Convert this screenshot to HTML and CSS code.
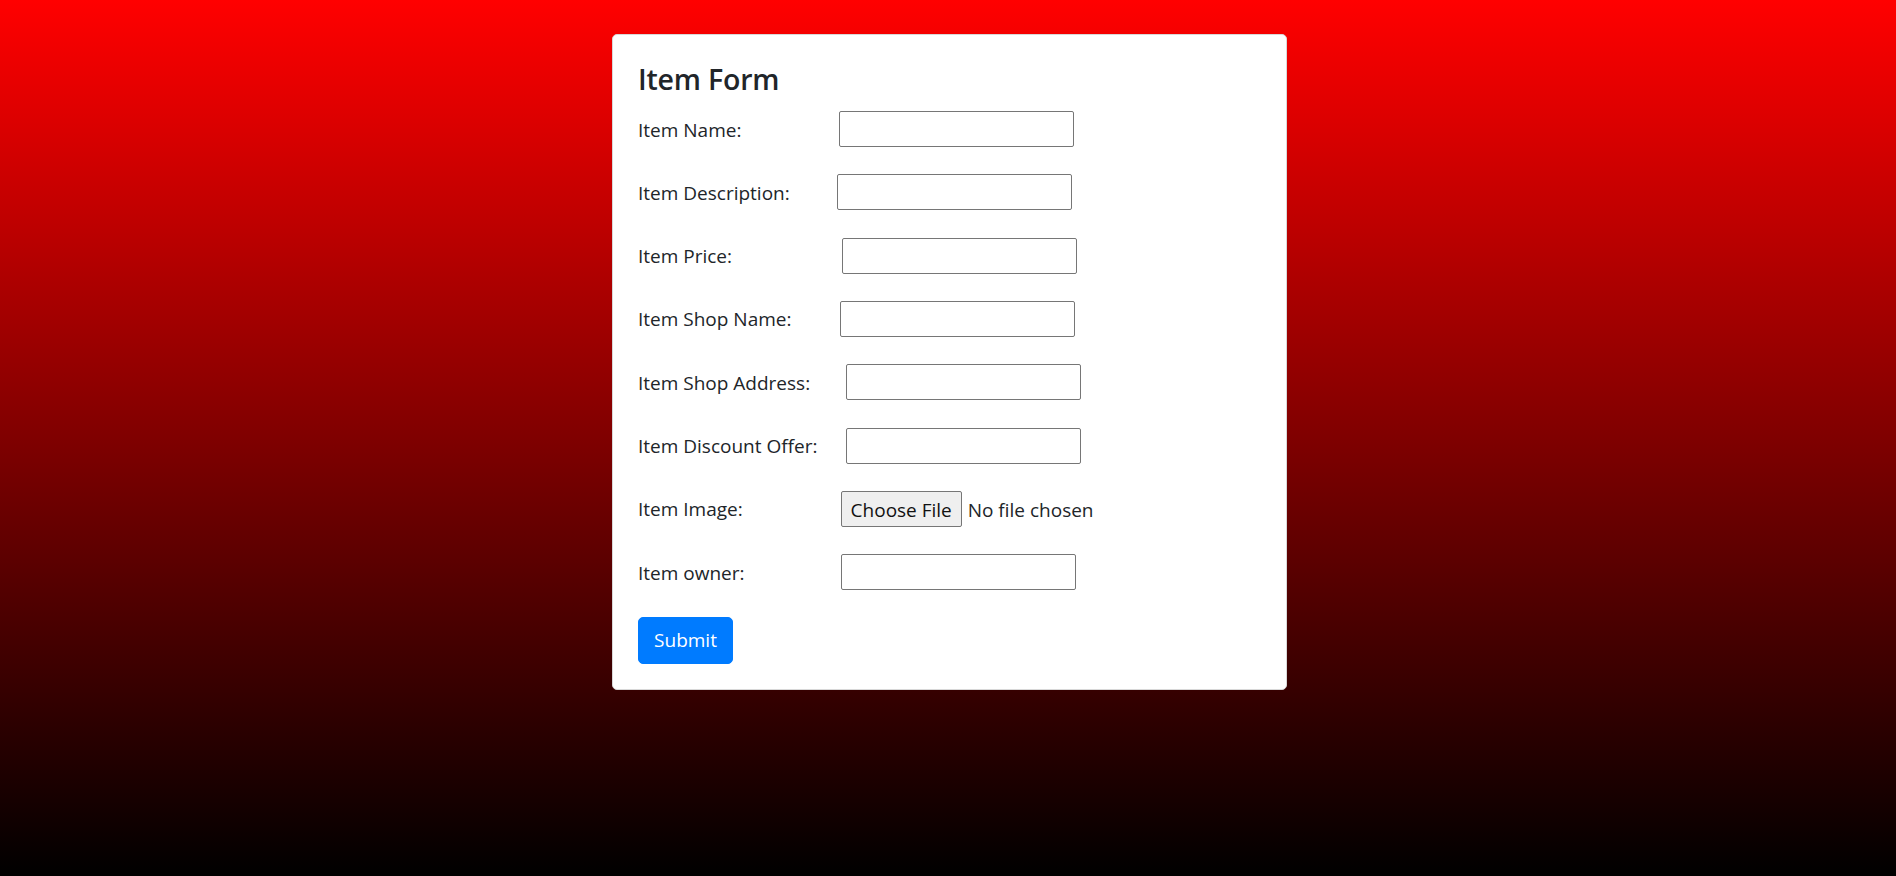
FILE: index.html
```html
<!DOCTYPE html>
<html lang="en">
<head>
<meta charset="utf-8">
<title>Item Form</title>
<link rel="stylesheet" href="styles.css">
</head>
<body>
<main class="page">
  <form class="card">
    <h2 class="card-title">Item Form</h2>
    <div class="rows">
      <div class="row">
        <label class="lbl" for="name">Item Name:</label>
        <input class="field off-2" id="name" type="text">
      </div>
      <div class="row">
        <label class="lbl" for="desc">Item Description:</label>
        <input class="field off-0" id="desc" type="text">
      </div>
      <div class="row">
        <label class="lbl" for="price">Item Price:</label>
        <input class="field off-5" id="price" type="text">
      </div>
      <div class="row">
        <label class="lbl" for="shop">Item Shop Name:</label>
        <input class="field off-3" id="shop" type="text">
      </div>
      <div class="row">
        <label class="lbl" for="addr">Item Shop Address:</label>
        <input class="field off-9" id="addr" type="text">
      </div>
      <div class="row">
        <label class="lbl" for="disc">Item Discount Offer:</label>
        <input class="field off-9" id="disc" type="text">
      </div>
      <div class="row">
        <label class="lbl" for="img">Item Image:</label>
        <input class="file off-4" id="img" type="file">
      </div>
      <div class="row">
        <label class="lbl" for="owner">Item owner:</label>
        <input class="field off-4" id="owner" type="text">
      </div>
      <div class="actions">
        <button class="btn-submit" type="submit">Submit</button>
      </div>
    </div>
  </form>
</main>
</body>
</html>
```
FILE: styles.css
```css
* { box-sizing: border-box; }

html, body {
  margin: 0;
  padding: 0;
}

body {
  min-height: 876px;
  background: linear-gradient(to bottom, #ff0000 0%, #000000 100%);
  font-family: "Open Sans", "Noto Sans", Arial, sans-serif;
  color: #212529;
}

.page {
  display: flex;
  justify-content: center;
  padding-top: 34px;
}

.card {
  width: 675px;
  background: #fff;
  border: 1px solid #d8d8d8;
  border-radius: 5px;
  padding: 26px 25px 25px 25px;
  margin-left: 3px;
}

.card-title {
  margin: 0 0 14px 0;
  font-size: 28.5px;
  font-weight: 600;
  line-height: 36px;
  letter-spacing: -0.2px;
}

.rows {
  display: flex;
  flex-direction: column;
  gap: 27.33px;
}

.row {
  display: flex;
  align-items: center;
  height: 36px;
}

.actions {
  display: flex;
  margin-top: -1px;
}

.lbl {
  width: 199px;
  flex: none;
  font-size: 19px;
  line-height: 30px;
  padding-top: 1px;
}

.field {
  width: 235px;
  height: 36px;
  border: 1px solid #767676;
  border-radius: 2px;
  background: #fff;
  padding: 1px 2px;
  font: inherit;
  font-size: 20px;
}

.off-0 { margin-left: 0; }
.off-2 { margin-left: 2px; }
.off-3 { margin-left: 3px; }
.off-4 { margin-left: 3.7px; }
.off-5 { margin-left: 5px; }
.off-9 { margin-left: 9px; }

.file {
  font-family: inherit;
  font-size: 19px;
  color: #212529;
  height: 36px;
  line-height: 36px;
}

.file::file-selector-button {
  height: 36px;
  width: 121px;
  margin-right: 6px;
  padding: 0;
  font: inherit;
  color: #111;
  background: #efefef;
  border: 1px solid #767676;
  border-radius: 2px;
}

.btn-submit {
  width: 95px;
  height: 47px;
  background: #007bff;
  color: #fff;
  border: 1px solid #007bff;
  border-radius: 5px;
  font-family: inherit;
  font-size: 19px;
  padding: 0;
}
```
